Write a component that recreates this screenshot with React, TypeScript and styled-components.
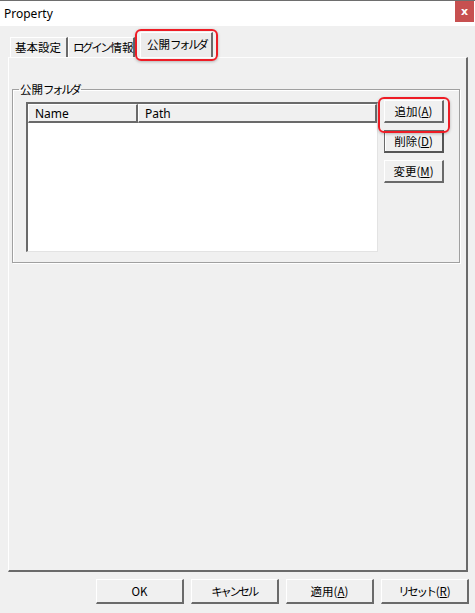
import React from "react";
import styled, { createGlobalStyle, css } from "styled-components";

// ======== ESTILOS ========
const GlobalStyle = createGlobalStyle`
  html, body { margin: 0; padding: 0; background: #f0f0f0; }
  body {
    font-family: "Noto Sans", "Noto Sans CJK JP", sans-serif;
    font-size: 12px;
    color: #000;
  }
`;

const jp = `"Noto Sans CJK JP", "Noto Sans", sans-serif`;

const Window = styled.div`
  width: 475px;
  height: 613px;
  display: flex;
  flex-direction: column;
  background: #f0f0f0;
  overflow: hidden;
`;

const TitleBar = styled.div`
  height: 25px;
  border-top: 1px solid #6e6e6e;
  background: #fff;
  display: flex;
  align-items: flex-start;
  justify-content: space-between;
`;

const Title = styled.span`
  padding: 5px 0 0 4px;
  font-size: 12px;
  line-height: 15px;
`;

const CloseBox = styled.div`
  width: 19px;
  height: 21px;
  margin-right: 1px;
  background: #c75050;
  color: #fff;
  font-family: "DejaVu Sans", sans-serif;
  font-weight: bold;
  font-size: 11px;
  display: flex;
  align-items: center;
  justify-content: center;
`;

const Body = styled.div`
  flex: 1;
  display: flex;
  flex-direction: column;
  padding: 6px 7px 0 8px;
`;

const TabStrip = styled.div`
  display: flex;
  align-items: flex-end;
  padding-left: 2px;
  height: 25px;
`;

const Highlight = css`
  position: relative;
  &::after {
    content: "";
    position: absolute;
    border: 2px solid #ee1c25;
    border-radius: 6px;
    box-shadow: 0 1px 3px rgba(0, 0, 0, 0.25);
    pointer-events: none;
  }
`;

// narrower katakana, like Meiryo UI
const Kana = styled.span`
  display: inline-block;
  letter-spacing: -2.4px;
  margin-right: 1px;
`;

const Tab = styled.div<{ $active?: boolean; $marked?: boolean; $w: number }>`
  font-family: ${jp};
  font-size: 11.5px;
  line-height: 14px;
  width: ${(p) => p.$w}px;
  height: ${(p) => (p.$active ? 25 : 20)}px;
  box-sizing: border-box;
  white-space: nowrap;
  padding: ${(p) => (p.$active ? "4px 0 0 6px" : "2px 0 0 4px")};
  margin-left: ${(p) => (p.$active ? 5 : 0)}px;
  background: ${(p) => (p.$active ? "#ececec" : "#f0f0f0")};
  border-top: 1px solid #fff;
  border-left: 1px solid #fff;
  border-right: 2px solid #6a6a6a;
  ${(p) => p.$marked && Highlight}
  ${(p) =>
    p.$marked &&
    css`
      &::after { left: -6px; right: -7px; top: -4px; bottom: -4px; }
    `}
`;

const Panel = styled.div`
  flex: 1;
  border-top: 1px solid #fdfdfd;
  border-left: 1px solid #fff;
  border-right: 2px solid #6a6a6a;
  border-bottom: 2px solid #6a6a6a;
  padding: 24px 6px 0 3px;
`;

const GroupBox = styled.fieldset`
  margin: 0;
  border: 1px solid #a0a0a0;
  box-shadow: inset 1px 1px 0 #fff, 1px 1px 0 #fff;
  padding: 6px 13px 10px 13px;
  display: flex;
`;

const Legend = styled.legend`
  font-family: ${jp};
  font-size: 11.5px;
  line-height: 14px;
  padding: 0 1px;
  margin-left: -7px;
`;

const ListView = styled.div`
  width: 352px;
  height: 150px;
  box-sizing: border-box;
  background: #fff;
  border-top: 2px solid #6a6a6a;
  border-left: 2px solid #6a6a6a;
  border-right: 1px solid #e3e3e3;
  border-bottom: 1px solid #e3e3e3;
`;

const Header = styled.div`
  display: flex;
  height: 19px;
  background: #f0f0f0;
`;

const HeaderCell = styled.div<{ $w?: number }>`
  ${(p) => (p.$w ? `width: ${p.$w}px;` : "flex: 1;")}
  box-sizing: border-box;
  padding-left: 6px;
  line-height: 17px;
  font-size: 12px;
  border-top: 1px solid #fff;
  border-left: 1px solid #fff;
  border-right: 2px solid #6a6a6a;
  border-bottom: 2px solid #6a6a6a;
`;

const ButtonColumn = styled.div`
  display: flex;
  flex-direction: column;
  gap: 7px;
  margin: -2px 0 0 6px;
`;

const Button = styled.div<{ $w: number; $h: number; $strong?: boolean; $marked?: boolean }>`
  width: ${(p) => p.$w}px;
  height: ${(p) => p.$h}px;
  box-sizing: border-box;
  background: #f0f0f0;
  border-top: 1px solid ${(p) => (p.$strong ? "#6a6a6a" : "#fff")};
  border-left: 1px solid ${(p) => (p.$strong ? "#6a6a6a" : "#fff")};
  border-right: 2px solid ${(p) => (p.$strong ? "#555" : "#6a6a6a")};
  border-bottom: 2px solid ${(p) => (p.$strong ? "#555" : "#6a6a6a")};
  ${(p) => p.$strong && "box-shadow: inset 1px 1px 0 #fff;"}
  font-family: ${jp};
  font-size: 11.5px;
  white-space: nowrap;
  display: flex;
  align-items: center;
  justify-content: center;
  ${(p) => p.$marked && Highlight}
  ${(p) =>
    p.$marked &&
    css`
      &::after { left: -7px; right: -8px; top: -4px; bottom: -12px; }
    `}
  u { text-decoration: underline; text-underline-offset: 1px; }
`;

const Footer = styled.div`
  display: flex;
  justify-content: flex-end;
  gap: 7px;
  padding: 7px 0 9px 0;
  margin-right: -1px;
`;

// ======== COMPONENTE ========
const App: React.FC = () => {
  const footer = [
    <>OK</>,
    <Kana>キャンセル</Kana>,
    <>適用(<u>A</u>)</>,
    <><Kana>リセット</Kana>(<u>R</u>)</>,
  ];

  return (
    <>
      <GlobalStyle />
      <Window>
        <TitleBar>
          <Title>Property</Title>
          <CloseBox>x</CloseBox>
        </TitleBar>
        <Body>
          <TabStrip>
            <Tab $w={58}>基本設定</Tab>
            <Tab $w={67}><Kana>ログイン</Kana>情報</Tab>
            <Tab $w={73} $active $marked>公開<Kana>フォルダ</Kana></Tab>
          </TabStrip>
          <Panel>
            <GroupBox>
              <Legend>公開<Kana>フォルダ</Kana></Legend>
              <ListView>
                <Header>
                  <HeaderCell $w={110}>Name</HeaderCell>
                  <HeaderCell>Path</HeaderCell>
                </Header>
              </ListView>
              <ButtonColumn>
                <Button $w={60} $h={23} $marked>追加(<u>A</u>)</Button>
                <Button $w={60} $h={23} $strong>削除(<u>D</u>)</Button>
                <Button $w={60} $h={23}>変更(<u>M</u>)</Button>
              </ButtonColumn>
            </GroupBox>
          </Panel>
          <Footer>
            {footer.map((label, i) => (
              <Button key={i} $w={88} $h={25}>{label}</Button>
            ))}
          </Footer>
        </Body>
      </Window>
    </>
  );
};

export default App;
